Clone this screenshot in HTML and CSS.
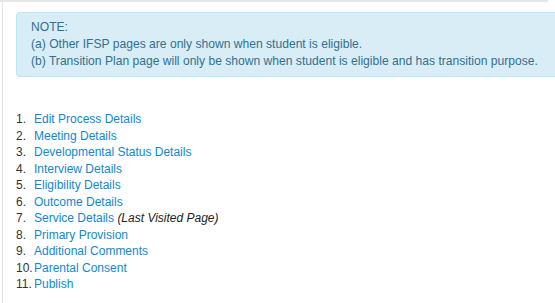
FILE: index.html
```html
<!DOCTYPE html>
<html lang="en">
<head>
  <meta charset="UTF-8">
  <title>IFSP Pages</title>
  <link rel="stylesheet" href="styles.css">
</head>
<body>
  <div class="topline"></div>
  <div class="panel">
    <div class="alert">
      NOTE:<br>
      (a) Other IFSP pages are only shown when student is eligible.<br>
      (b) Transition Plan page will only be shown when student is eligible and has transition purpose.
    </div>
    <ol class="pages">
      <li><a href="#">Edit Process Details</a></li>
      <li><a href="#">Meeting Details</a></li>
      <li><a href="#">Developmental Status Details</a></li>
      <li><a href="#">Interview Details</a></li>
      <li><a href="#">Eligibility Details</a></li>
      <li><a href="#">Outcome Details</a></li>
      <li><a href="#">Service Details</a> <em>(Last Visited Page)</em></li>
      <li><a href="#">Primary Provision</a></li>
      <li><a href="#">Additional Comments</a></li>
      <li><a href="#">Parental Consent</a></li>
      <li><a href="#">Publish</a></li>
    </ol>
  </div>
</body>
</html>
```
FILE: styles.css
```css
body {
  margin: 0;
  font-family: 'Liberation Sans', Arial, sans-serif;
  font-size: 12px;
  color: #333;
  background: #fff;
  overflow: hidden;
}

.topline {
  height: 2px;
  width: 548px;
  background: #e6e6e6;
}

.panel {
  margin-left: 2px;
  border-left: 1px solid #e3e3e3;
  padding: 10px 0 0 13px;
  height: 301px;
  box-sizing: border-box;
}

.alert {
  background: #d9edf7;
  border: 1px solid #bce8f1;
  border-right: none;
  border-radius: 4px 0 0 4px;
  color: #31708f;
  padding: 6px 0 6px 14px;
  line-height: 17px;
  font-size: 12.1px;
  margin-bottom: 34px;
}

.pages {
  margin: 0;
  padding: 0;
  list-style: none;
  counter-reset: page;
  line-height: 16.5px;
}

.pages li {
  counter-increment: page;
}

.pages li::before {
  content: counter(page) ".";
  display: inline-block;
  width: 18px;
}

.pages a {
  color: #0f88d2;
  text-decoration: none;
}

.pages em {
  color: #222;
}
```
